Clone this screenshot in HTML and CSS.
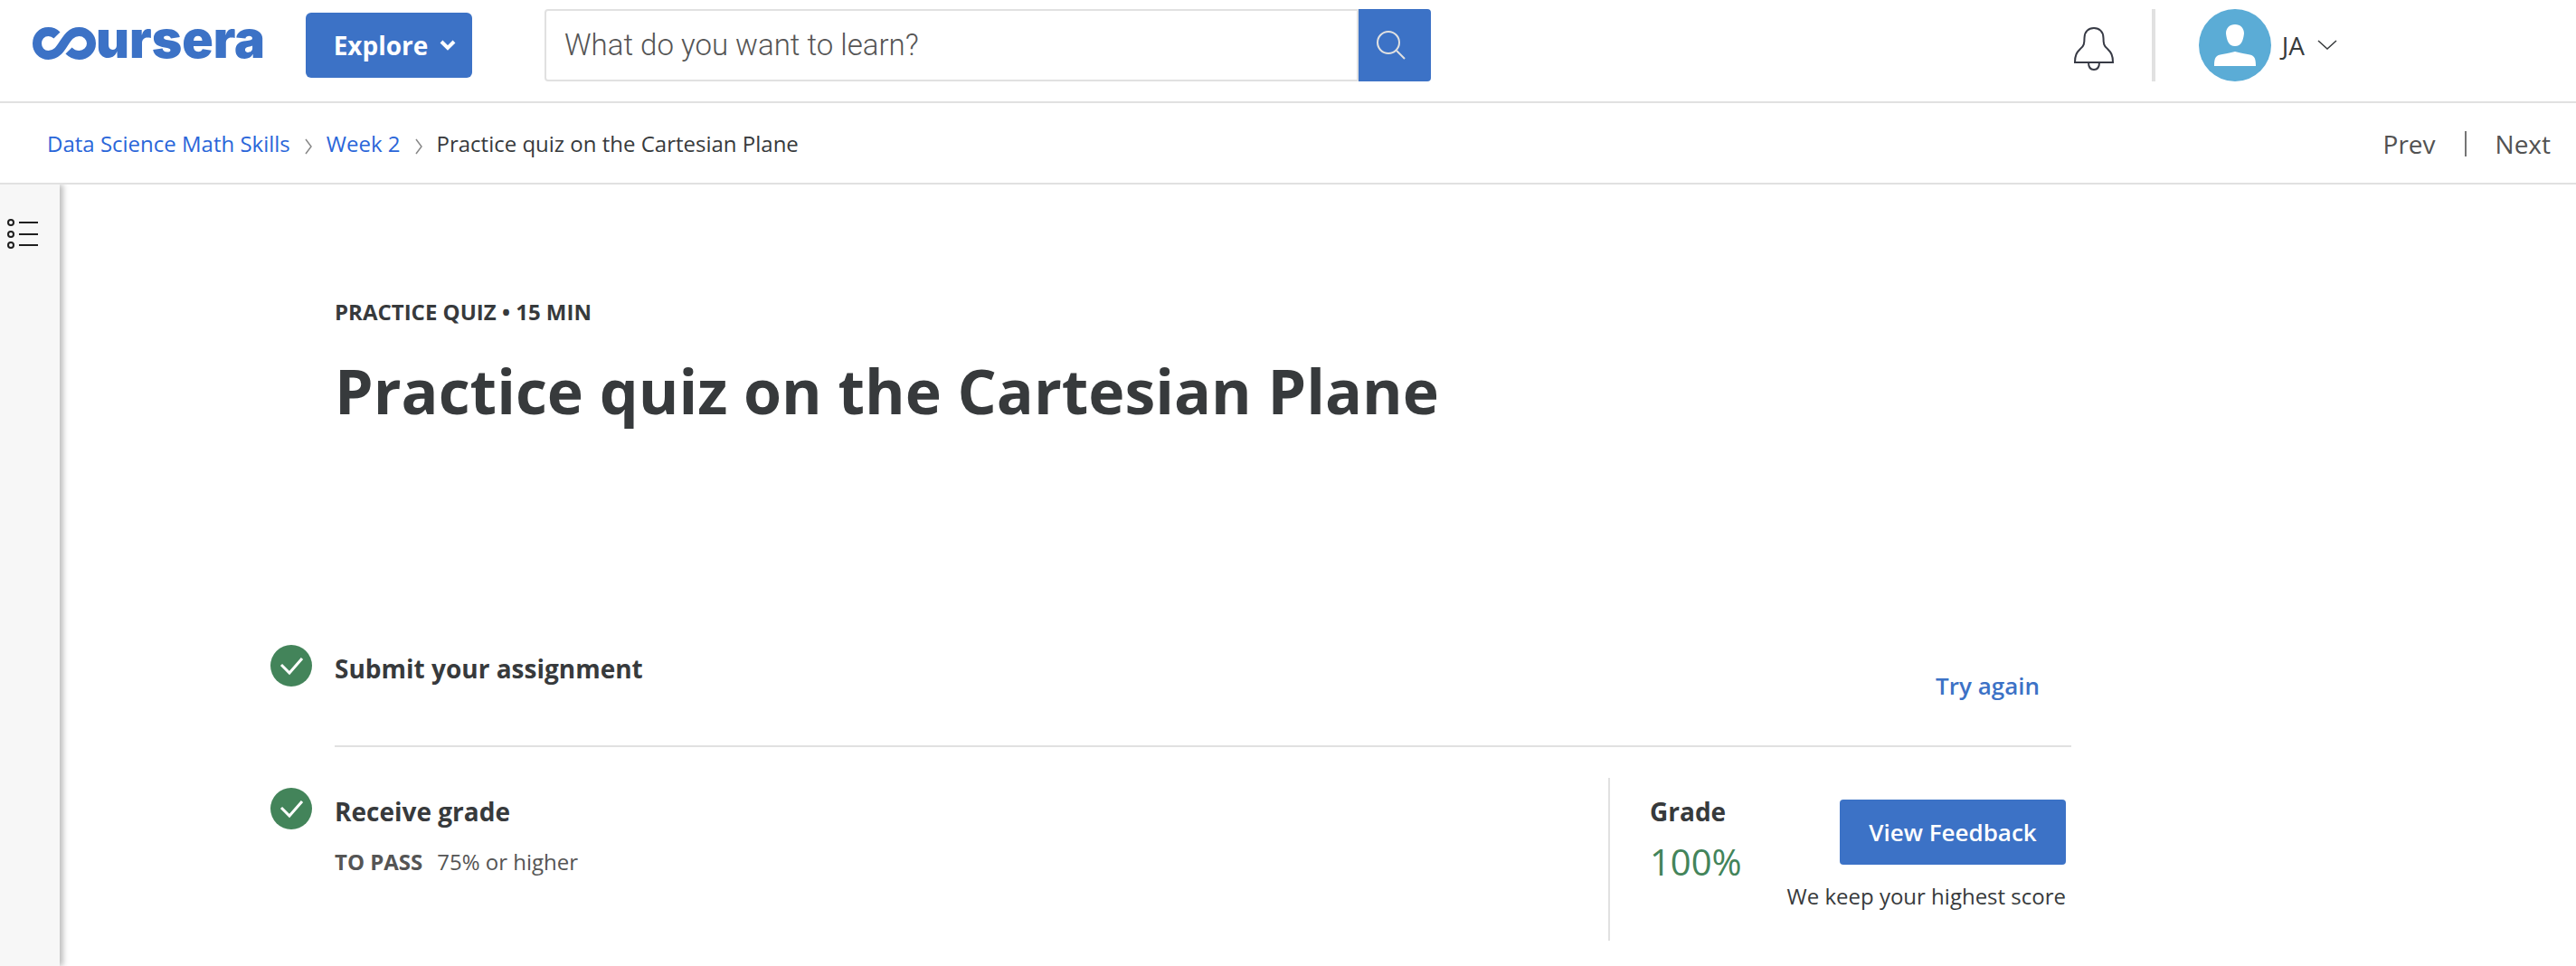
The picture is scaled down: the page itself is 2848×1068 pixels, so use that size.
FILE: index.html
```html
<!DOCTYPE html>
<html lang="en">
<head>
<meta charset="utf-8">
<title>Practice quiz on the Cartesian Plane | Coursera</title>
<link rel="stylesheet" href="styles.css">
</head>
<body>
<header class="topbar">
  <a class="logo" href="#" aria-label="coursera">
    <svg class="logo-mark" viewBox="0 0 70 36" aria-hidden="true"><path d="M27 9C24 6 21 5 17.500 5C10 5 5 11 5 18S10 31 17.500 31C35 31 34 5 51.500 5C59 5 65 11 65 18S59 31 51.500 31C47 31 43 29 40 26" fill="none" stroke="currentColor" stroke-width="10"/></svg>
    <span class="logo-text">ursera</span>
  </a>
  <button class="explore" type="button">Explore
    <svg class="explore-caret" viewBox="0 0 16 12" aria-hidden="true"><path d="M1 2l7 7 7-7" fill="none" stroke="currentColor" stroke-width="4"/></svg>
  </button>
  <form class="search" role="search">
    <input class="search-input" type="text" aria-label="Search" placeholder="What do you want to learn?">
    <button class="search-button" type="submit" aria-label="Submit search">
      <svg class="search-icon" viewBox="0 0 32 32" aria-hidden="true"><circle cx="13" cy="13" r="12" fill="none" stroke="currentColor" stroke-width="2"/><path d="M22 22l9 9" stroke="currentColor" stroke-width="2"/></svg>
    </button>
  </form>
  <div class="account">
    <button class="icon-button" type="button" aria-label="Notifications">
      <svg class="bell" viewBox="0 0 44 48" aria-hidden="true"><g fill="none" stroke="currentColor" stroke-width="2"><path d="M1 39H43C43 31 41 28 37 24C33 21 32.500 18 32.500 12C32.500 5 28 1 22 1S11.500 5 11.500 12C11.500 18 11 21 7 24C3 28 1 31 1 39Z"/><path d="M16 39C16 44 18 47 22 47S28 44 28 39"/></g></svg>
    </button>
    <span class="divider"></span>
    <button class="profile" type="button">
      <svg class="avatar" viewBox="0 0 80 80" aria-hidden="true"><circle cx="40" cy="40" r="40" fill="#5bacd6"/><path d="M40 17C46 17 50 21 50 27C49 35 47 41 40 41S31 35 30 27C30 21 34 17 40 17ZM17 63C17 53 19 51 26 50C32 49 36 48 40 47C44 48 48 49 54 50C61 51 63 53 63 63Z" fill="#fff"/></svg>
      JA
      <svg class="profile-caret" viewBox="0 0 22 12" aria-hidden="true"><path d="M1 1l10 9L21 1" fill="none" stroke="currentColor" stroke-width="1.500"/></svg>
    </button>
  </div>
</header>
<div class="subbar">
  <nav class="crumbs" aria-label="Breadcrumb">
    <a href="#">Data Science Math Skills</a>
    <svg class="crumb-arrow" viewBox="0 0 8 16" aria-hidden="true"><path d="M1 0l6 8-6 8" fill="none" stroke="currentColor" stroke-width="1.500"/></svg>
    <a href="#">Week 2</a>
    <svg class="crumb-arrow" viewBox="0 0 8 16" aria-hidden="true"><path d="M1 0l6 8-6 8" fill="none" stroke="currentColor" stroke-width="1.500"/></svg>
    <span>Practice quiz on the Cartesian Plane</span>
  </nav>
  <nav class="pager" aria-label="Items">
    <a href="#">Prev</a>
    <span class="pager-line"></span>
    <a href="#">Next</a>
  </nav>
</div>
<div class="shell">
  <aside class="rail">
    <button class="icon-button" type="button" aria-label="Show course outline">
      <svg class="outline-icon" viewBox="0 0 34 34" aria-hidden="true"><g fill="none" stroke="currentColor" stroke-width="2"><circle cx="4" cy="4" r="3"/><circle cx="4" cy="17" r="3"/><circle cx="4" cy="29" r="3"/><path d="M13 4H34M13 17H34M13 29H34"/></g></svg>
    </button>
  </aside>
  <main class="content">
    <p class="kicker">PRACTICE QUIZ • 15 MIN</p>
    <h1 class="title">Practice quiz on the Cartesian Plane</h1>
    <section class="step step-submit">
      <svg class="check" viewBox="0 0 46 46" aria-hidden="true"><circle cx="23" cy="23" r="23" fill="#43845a"/><path d="M12 22l9 9L35 15" fill="none" stroke="#fff" stroke-width="3"/></svg>
      <div class="step-body">
        <h2 class="step-title">Submit your assignment</h2>
        <button class="try" type="button">Try again</button>
      </div>
    </section>
    <section class="step step-grade">
      <svg class="check" viewBox="0 0 46 46" aria-hidden="true"><circle cx="23" cy="23" r="23" fill="#43845a"/><path d="M12 22l9 9L35 15" fill="none" stroke="#fff" stroke-width="3"/></svg>
      <div class="step-body">
        <div class="step-info">
          <h2 class="step-title">Receive grade</h2>
          <p class="pass"><strong>TO PASS</strong><span>75% or higher</span></p>
        </div>
        <div class="grade">
          <div class="grade-value">
            <h2 class="step-title">Grade</h2>
            <p class="score">100%</p>
          </div>
          <div class="feedback">
            <button class="primary" type="button">View Feedback</button>
            <p class="note">We keep your highest score</p>
          </div>
        </div>
      </div>
    </section>
  </main>
</div>
</body>
</html>
```
FILE: styles.css
```css
* { box-sizing: border-box; }
body {
  margin: 0;
  min-height: 100vh;
  display: flex;
  flex-direction: column;
  background: #fff;
  color: #373a3c;
  font-family: "Open Sans", "Noto Sans", sans-serif;
  font-size: 24px;
}
h1, h2, p { margin: 0; }
a { text-decoration: none; }
svg { display: block; flex: none; overflow: visible; }
button { margin: 0; padding: 0; border: 0; background: none; color: inherit; font: inherit; cursor: pointer; }

.topbar {
  display: flex;
  align-items: center;
  height: 114px;
  padding: 0 264px 12px 36px;
  border-bottom: 2px solid #e1e1e1;
}
.logo { display: flex; align-items: center; width: 302px; padding-bottom: 4px; color: #3c72c6; }
.logo-mark { width: 70px; height: 36px; }
.logo-text { font: 900 57px/64px Inter, sans-serif; padding-bottom: 8px; }
.explore {
  display: flex;
  align-items: center;
  justify-content: center;
  gap: 14px;
  width: 184px;
  height: 72px;
  padding-left: 12px;
  border-radius: 6px;
  background: #3c72c6;
  color: #fff;
  font-size: 28px;
  font-weight: 700;
}
.explore-caret { width: 16px; height: 12px; }
.search { display: flex; width: 980px; height: 80px; margin-left: 80px; }
.search-input {
  flex: 1;
  min-width: 0;
  padding: 0 20px 2px;
  border: 2px solid #e1e1e1;
  border-radius: 4px 0 0 4px;
  outline: 0;
  color: #666;
  font: 300 33px Roboto, "Liberation Sans", sans-serif;
}
.search-input::placeholder { color: #555; opacity: 1; }
.search-button {
  display: grid;
  place-items: center;
  width: 80px;
  padding-right: 8px;
  border-radius: 0 4px 4px 0;
  background: #3c72c6;
  color: #e1e1e1;
}
.search-icon { width: 32px; height: 32px; }
.account { display: flex; align-items: center; margin-left: auto; }
.bell { width: 44px; height: 48px; margin-top: 8px; color: #373a45; }
.divider { width: 4px; height: 80px; margin: 0 48px 0 42px; background: #e1e1e1; }
.profile { display: flex; align-items: center; gap: 12px; font-size: 28px; }
.avatar { width: 80px; height: 80px; }
.profile-caret { width: 22px; height: 12px; margin-left: 2px; }

.subbar {
  display: flex;
  align-items: center;
  justify-content: space-between;
  height: 90px;
  padding: 2px 28px 0 52px;
  border-bottom: 2px solid #e1e1e1;
}
.crumbs { display: flex; align-items: center; gap: 16px; padding-bottom: 2px; }
.crumbs a { color: #2a66d9; }
.crumb-arrow { width: 8px; height: 16px; margin-top: 8px; color: #888; }
.pager { display: flex; align-items: center; gap: 32px; font-size: 28px; }
.pager a { color: #525252; }
.pager-line { width: 2px; height: 28px; background: #757575; }

.shell { display: flex; flex: 1; }
.rail {
  width: 66px;
  padding: 38px 0 0 8px;
  background: #f7f7f7;
  color: #1f1f1f;
  box-shadow: 4px 0 6px rgba(0, 0, 0, .25);
  clip-path: inset(0 -16px 0 0);
}
.outline-icon { width: 34px; height: 34px; }
.content { flex: 1; max-width: 2224px; padding: 123px 0 28px 233px; }
.kicker { padding-left: 71px; line-height: 36px; font-weight: 700; }
.title { padding-left: 71px; margin-top: 21px; font-size: 68px; line-height: 96px; }
.step { display: flex; gap: 25px; }
.step-submit { margin-top: 233px; }
.step-grade { margin-top: 34px; }
.check { width: 46px; height: 46px; }
.step-body { flex: 1; display: flex; justify-content: space-between; }
.step-submit .step-body { height: 113px; border-bottom: 2px solid #e1e1e1; }
.step-grade .check { margin-top: 11px; }
.step-info, .grade-value { padding-top: 11px; }
.step-title { padding-top: 6px; font-size: 28px; line-height: 40px; }
.try { align-self: flex-start; padding: 27px 35px; color: #3c72c6; font-size: 26px; line-height: 36px; font-weight: 600; }
.pass { display: flex; gap: 16px; margin-top: 18px; color: #555; line-height: 36px; }
.grade {
  display: flex;
  justify-content: space-between;
  width: 512px;
  min-height: 180px;
  padding: 0 6px 0 44px;
  border-left: 2px solid #e1e1e1;
}
.score { margin-top: 8px; color: #43845a; font-size: 40px; line-height: 56px; }
.feedback { display: flex; flex-direction: column; align-items: flex-end; padding-top: 24px; }
.primary { width: 250px; height: 72px; border-radius: 4px; background: #3c72c6; color: #fff; font-size: 26px; font-weight: 600; }
.note { margin-top: 17px; line-height: 36px; }
```
